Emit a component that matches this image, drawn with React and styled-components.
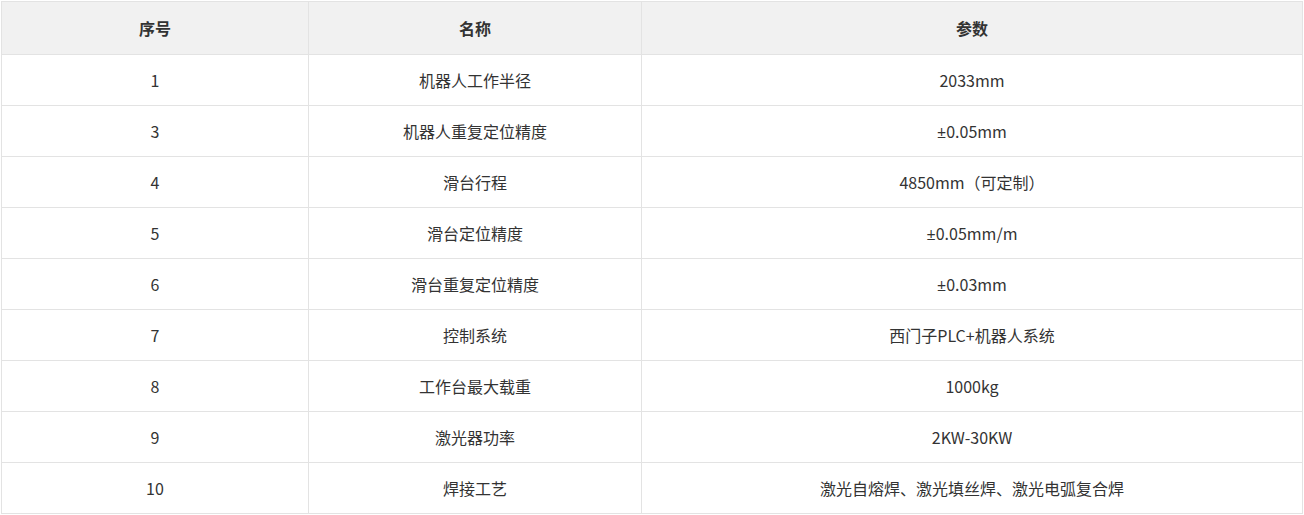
import React from 'react'
import styled, { createGlobalStyle } from 'styled-components'

const GlobalStyle = createGlobalStyle`
  html, body {
    margin: 0;
    padding: 0;
    background: #fff;
  }
  body {
    font-family: "Noto Sans CJK SC", "Noto Sans", sans-serif;
    color: #333;
  }
`

const Wrap = styled.div`
  padding: 1px 2px 0 1px;
`

const Table = styled.table`
  width: 1301px;
  border-collapse: collapse;
  table-layout: fixed;
  font-size: 16px;
  color: #333;
`

const HeadCell = styled.th`
  height: 52px;
  padding: 0;
  background: #f1f1f1;
  border: 1px solid #e3e3e3;
  font-weight: bold;
  text-align: center;
  vertical-align: middle;
`

const Cell = styled.td`
  height: 50px;
  padding: 0;
  border: 1px solid #e3e3e3;
  text-align: center;
  vertical-align: middle;
`

// the ± sign in the reference is the narrow latin glyph
const Sign = styled.span`
  font-family: "Open Sans", "Noto Sans", sans-serif;
`

const rows = [
  ['1', '机器人工作半径', '2033mm'],
  ['3', '机器人重复定位精度', '±0.05mm'],
  ['4', '滑台行程', '4850mm（可定制）'],
  ['5', '滑台定位精度', '±0.05mm/m'],
  ['6', '滑台重复定位精度', '±0.03mm'],
  ['7', '控制系统', '西门子PLC+机器人系统'],
  ['8', '工作台最大载重', '1000kg'],
  ['9', '激光器功率', '2KW-30KW'],
  ['10', '焊接工艺', '激光自熔焊、激光填丝焊、激光电弧复合焊'],
]

const Value = ({ text }) =>
  text.startsWith('±') ? (
    <>
      <Sign>±</Sign>
      {text.slice(1)}
    </>
  ) : (
    text
  )

export default function App() {
  return (
    <>
      <GlobalStyle />
      <Wrap>
        <Table>
          <colgroup>
            <col style={{ width: 307 }} />
            <col style={{ width: 333 }} />
            <col style={{ width: 661 }} />
          </colgroup>
          <thead>
            <tr>
              <HeadCell>序号</HeadCell>
              <HeadCell>名称</HeadCell>
              <HeadCell>参数</HeadCell>
            </tr>
          </thead>
          <tbody>
            {rows.map((r) => (
              <tr key={r[0]}>
                <Cell>{r[0]}</Cell>
                <Cell>{r[1]}</Cell>
                <Cell>
                  <Value text={r[2]} />
                </Cell>
              </tr>
            ))}
          </tbody>
        </Table>
      </Wrap>
    </>
  )
}
